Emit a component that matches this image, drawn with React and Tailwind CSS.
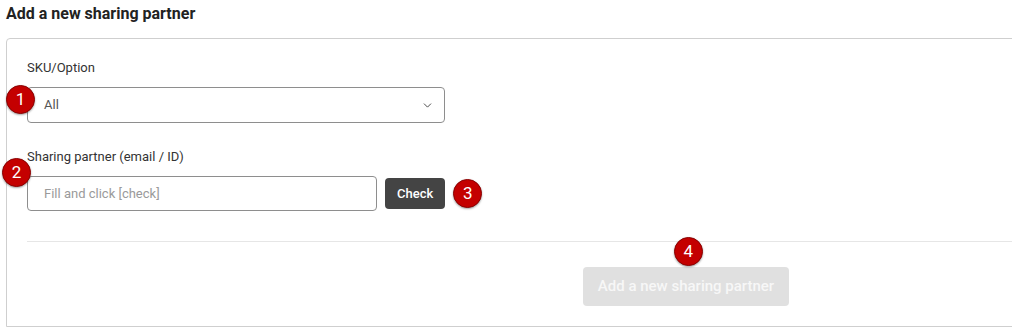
import React from "react";
import { ChevronDown } from "lucide-react";

const Badge = ({ n, className }) => (
  <span
    className={`absolute flex h-[29px] w-[29px] items-center justify-center rounded-full border border-[#8a0000] bg-[#c40000] text-[17px] leading-none text-white shadow-[0_1px_2px_rgba(0,0,0,0.35)] ${className}`}
  >
    {n}
  </span>
);

export default function App() {
  return (
    <div className="h-[330px] w-[1012px] overflow-hidden bg-white font-['Roboto',sans-serif] text-[#333]">
      <h2 className="ml-[6px] pt-[4px] text-[16px] font-bold leading-5 text-[#222]">
        Add a new sharing partner
      </h2>

      <div className="ml-[6px] mt-[14px] w-[1360px] rounded-tl-[4px] border border-[#cfcfcf] px-5 pb-5 pt-[21px]">
        {/* SKU / option */}
        <label className="block text-[13px] leading-4 text-[#333]">SKU/Option</label>
        <div className="relative mt-[11px] w-[418px]">
          <Badge n="1" className="left-[-21px] top-[-2px]" />
          <div className="flex h-9 items-center justify-between rounded-[4px] border border-[#8e8e8e] pl-4 pr-[10px] text-[13px] text-[#555]">
            <span>All</span>
            <ChevronDown size={13} strokeWidth={1.6} className="text-[#333]" />
          </div>
        </div>

        {/* Sharing partner */}
        <label className="mt-[26px] block text-[13px] leading-4 text-[#333]">
          Sharing partner (email / ID)
        </label>
        <div className="relative mt-[11px] flex items-center gap-2">
          <Badge n="2" className="left-[-25px] top-[-18px]" />
          <div className="flex h-[35px] w-[350px] items-center rounded-[4px] border border-[#8e8e8e] pl-4 text-[13px] text-[#9a9a9a]">
            Fill and click [check]
          </div>
          <button className="h-[31px] rounded-[4px] bg-[#444] px-3 text-[13px] font-medium text-white">
            Check
          </button>
          <span className="relative h-[29px] w-[29px]">
            <Badge n="3" className="left-0 top-0" />
          </span>
        </div>

        <div className="mt-[30px] border-t border-[#e6e6e6]" />

        <div className="mt-[25px] flex justify-center">
          <div className="relative">
            <Badge n="4" className="left-[91px] top-[-30px]" />
            <button className="h-[39px] rounded-[4px] bg-[#e0e0e0] px-[15px] text-[15px] font-medium text-[#f7f7f7]">
              Add a new sharing partner
            </button>
          </div>
        </div>
      </div>
    </div>
  );
}
